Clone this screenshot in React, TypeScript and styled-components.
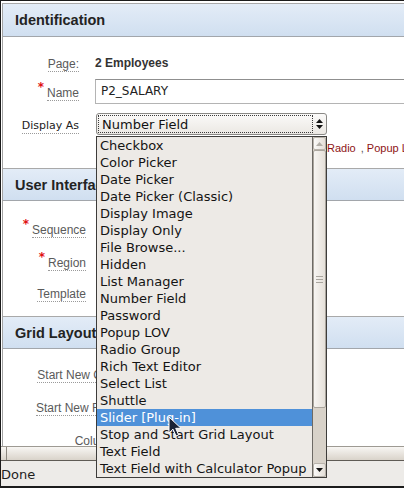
import React from "react";
import styled, { createGlobalStyle } from "styled-components";

const Global = createGlobalStyle`
  html, body { margin: 0; padding: 0; background: #fff; overflow: hidden; }
  #root { width: 404px; height: 488px; }
`;

const Window = styled.div`
  position: relative;
  width: 404px;
  height: 488px;
  box-sizing: border-box;
  border-top: 1px solid #1b1b1b;
  border-left: 1px solid #1b1b1b;
  border-bottom: 2px solid #1b1b1b;
  display: flex;
  flex-direction: column;
  background: #fff;
  overflow: hidden;
`;

const Viewport = styled.div`
  height: 445px;
  flex: none;
  overflow: hidden;
  box-sizing: border-box;
  padding: 2px 0 0 1px;
  background: #fff;
`;

const Region = styled.div`
  width: 800px;
  border-left: 1px solid #a4a4a4;
`;

const Section = styled.section`
  border-top: 1px solid #a9a9a9;
`;

const Header = styled.div<{ $h?: number }>`
  height: ${(p) => p.$h ?? 32}px;
  box-sizing: border-box;
  border-bottom: 1px solid #a2a6ab;
  background: linear-gradient(#e3ecf7, #d0dff0);
  display: flex;
  align-items: center;
  padding-left: 12px;
  font-family: "Liberation Sans", Arial, sans-serif;
  font-weight: bold;
  font-size: 14.5px;
  color: #232323;
`;

const Body = styled.div<{ $h: number; $pt: number }>`
  height: ${(p) => p.$h}px;
  box-sizing: border-box;
  padding-top: ${(p) => p.$pt}px;
  display: flex;
  flex-direction: column;
`;

const Row = styled.div<{ $lw: number; $h: number; $mt?: number }>`
  display: grid;
  grid-template-columns: ${(p) => p.$lw}px 1fr;
  column-gap: 16px;
  align-items: center;
  height: ${(p) => p.$h}px;
  margin-top: ${(p) => p.$mt ?? 0}px;
`;

const LabelCell = styled.div`
  justify-self: end;
  display: flex;
  align-items: flex-start;
`;

const Star = styled.span`
  color: #e01010;
  font-family: "DejaVu Sans", sans-serif;
  font-weight: bold;
  font-size: 12px;
  line-height: 10px;
  margin-right: 3px;
`;

const Label = styled.span<{ $dark?: boolean; $pt?: number }>`
  display: inline-block;
  margin-top: ${(p) => p.$pt ?? 0}px;
  font-family: ${(p) => (p.$dark ? '"DejaVu Sans", sans-serif' : '"Liberation Sans", Arial, sans-serif')};
  font-size: ${(p) => (p.$dark ? 11 : 12)}px;
  line-height: 14px;
  color: ${(p) => (p.$dark ? "#222" : "#5a5a5a")};
  border-bottom: 1px dotted #9a9a9a;
  white-space: nowrap;
`;

const Value = styled.span`
  font-family: "Liberation Sans", Arial, sans-serif;
  font-weight: bold;
  font-size: 12px;
  color: #333;
`;

const TextInput = styled.div`
  width: 360px;
  height: 25px;
  box-sizing: border-box;
  border: 1px solid #b4b4b4;
  border-top-color: #8f8f8f;
  padding-left: 5px;
  display: flex;
  align-items: center;
  font-family: "DejaVu Sans", sans-serif;
  font-size: 12px;
  color: #222;
`;

const Select = styled.div`
  margin-left: 1px;
  width: 231px;
  height: 22px;
  box-sizing: border-box;
  border: 1px solid #8a8986;
  border-radius: 3px;
  background: linear-gradient(#fbfaf9, #ebe8e3);
  padding: 1px;
  display: flex;
`;

const FocusBox = styled.div`
  flex: 1;
  border: 1px dotted #3a3a3a;
  display: flex;
  align-items: center;
  padding-left: 3px;
  font-family: "DejaVu Sans", sans-serif;
  font-size: 13px;
  color: #111;
`;

const Spinner = styled.div`
  width: 12px;
  display: flex;
  flex-direction: column;
  align-items: center;
  justify-content: center;
  gap: 2px;
`;

const Note = styled.div`
  padding-left: 232px;
  font-family: "Liberation Sans", Arial, sans-serif;
  font-size: 11px;
  color: #8e1414;
  white-space: nowrap;
`;

const Comma = styled.span`
  color: #555;
  margin: 0 3px 0 5px;
`;

const HScroll = styled.div`
  height: 15px;
  flex: none;
  box-sizing: border-box;
  border-top: 1px solid #9e9a93;
  border-bottom: 1px solid #5f5b55;
  background: linear-gradient(#f8f6f3, #d9d3ca);
  display: flex;
`;

const HThumbEdge = styled.div`
  width: 5px;
  border-right: 1px solid #8c877f;
`;

const StatusBar = styled.div`
  flex: 1;
  background: #edebe8;
  display: flex;
  align-items: center;
  padding-top: 1px;
  font-family: "DejaVu Sans", sans-serif;
  font-size: 13px;
  color: #1e1e1e;
`;

const DropList = styled.div`
  position: absolute;
  left: 95px;
  top: 135px;
  width: 231px;
  height: 342px;
  box-sizing: border-box;
  border: 1px solid #3d3c3a;
  background: #edeae6;
  display: flex;
`;

const Items = styled.div`
  flex: 1;
  border-right: 1px solid #6d6a65;
  overflow: hidden;
`;

const Item = styled.div<{ $sel?: boolean }>`
  height: 17px;
  line-height: 17px;
  padding-left: 3px;
  font-family: "DejaVu Sans", sans-serif;
  font-size: 13px;
  white-space: nowrap;
  color: ${(p) => (p.$sel ? "#fff" : "#141414")};
  background: ${(p) => (p.$sel ? "#4f91d9" : "transparent")};
`;

const VScroll = styled.div`
  width: 13px;
  display: flex;
  flex-direction: column;
  background: #d8d2c9;
`;

const ScrollBtn = styled.div<{ $h: number }>`
  height: ${(p) => p.$h}px;
  box-sizing: border-box;
  border: 1px solid #b8b3ab;
  border-radius: 2px;
  background: linear-gradient(90deg, #fbfaf8, #e4dfd8);
  display: flex;
  align-items: center;
  justify-content: center;
`;

const Thumb = styled.div`
  height: 258px;
  box-sizing: border-box;
  border: 1px solid #aaa59d;
  border-radius: 2px;
  background: linear-gradient(90deg, #f7f5f2, #e5e0d9);
  display: flex;
  flex-direction: column;
  align-items: center;
  justify-content: center;
  gap: 2px;
`;

const Grip = styled.div`
  width: 7px;
  height: 1px;
  background: #a9a59e;
`;

const Track = styled.div`
  flex: 1;
`;

const Cursor = styled.svg`
  position: absolute;
  left: 167px;
  top: 415px;
`;

const Tri = ({ up, color }: { up?: boolean; color: string }) => (
  <svg width="7" height="4" viewBox="0 0 7 4">
    <path d={up ? "M0 4 L3.5 0 L7 4 Z" : "M0 0 L7 0 L3.5 4 Z"} fill={color} />
  </svg>
);

const options = [
  "Checkbox",
  "Color Picker",
  "Date Picker",
  "Date Picker (Classic)",
  "Display Image",
  "Display Only",
  "File Browse...",
  "Hidden",
  "List Manager",
  "Number Field",
  "Password",
  "Popup LOV",
  "Radio Group",
  "Rich Text Editor",
  "Select List",
  "Shuttle",
  "Slider [Plug-in]",
  "Stop and Start Grid Layout",
  "Text Field",
  "Text Field with Calculator Popup",
];

export default function App() {
  return (
    <>
      <Global />
      <Window>
        <Viewport>
          <Region>
            <Section>
              <Header $h={33}>Identification</Header>
              <Body $h={131} $pt={14}>
                <Row $lw={76} $h={24}>
                  <LabelCell>
                    <Label $pt={2}>Page:</Label>
                  </LabelCell>
                  <Value>2 Employees</Value>
                </Row>
                <Row $lw={76} $h={26} $mt={3}>
                  <LabelCell>
                    <Star>*</Star>
                    <Label $pt={4}>Name</Label>
                  </LabelCell>
                  <TextInput>P2_SALARY</TextInput>
                </Row>
                <Row $lw={76} $h={22} $mt={9}>
                  <LabelCell>
                    <Label $dark $pt={4}>Display As</Label>
                  </LabelCell>
                  <Select>
                    <FocusBox>Number Field</FocusBox>
                    <Spinner>
                      <Tri up color="#111" />
                      <Tri color="#111" />
                    </Spinner>
                  </Select>
                </Row>
                <Row $lw={76} $h={16} $mt={5}>
                  <span />
                  <Note>
                    Radio<Comma>,</Comma>Popup LOV
                  </Note>
                </Row>
              </Body>
            </Section>
            <Section>
              <Header>User Interface</Header>
              <Body $h={115} $pt={11}>
                <Row $lw={83} $h={33}>
                  <LabelCell>
                    <Star>*</Star>
                    <Label $pt={4}>Sequence</Label>
                  </LabelCell>
                  <span />
                </Row>
                <Row $lw={83} $h={33}>
                  <LabelCell>
                    <Star>*</Star>
                    <Label $pt={4}>Region</Label>
                  </LabelCell>
                  <span />
                </Row>
                <Row $lw={83} $h={33}>
                  <LabelCell>
                    <Label>Template</Label>
                  </LabelCell>
                  <span />
                </Row>
              </Body>
            </Section>
            <Section>
              <Header>Grid Layout</Header>
              <Body $h={120} $pt={10}>
                <Row $lw={113} $h={33}>
                  <LabelCell>
                    <Label>Start New Grid</Label>
                  </LabelCell>
                  <span />
                </Row>
                <Row $lw={113} $h={33}>
                  <LabelCell>
                    <Label>Start New Row</Label>
                  </LabelCell>
                  <span />
                </Row>
                <Row $lw={113} $h={33}>
                  <LabelCell>
                    <Label>Column</Label>
                  </LabelCell>
                  <span />
                </Row>
              </Body>
            </Section>
          </Region>
        </Viewport>
        <HScroll>
          <HThumbEdge />
        </HScroll>
        <StatusBar>Done</StatusBar>

        <DropList>
          <Items>
            {options.map((o) => (
              <Item key={o} $sel={o === "Slider [Plug-in]"}>
                {o}
              </Item>
            ))}
          </Items>
          <VScroll>
            <ScrollBtn $h={13}>
              <Tri up color="#b3afa8" />
            </ScrollBtn>
            <Thumb>
              <Grip />
              <Grip />
              <Grip />
            </Thumb>
            <Track />
            <ScrollBtn $h={14}>
              <Tri color="#111" />
            </ScrollBtn>
          </VScroll>
        </DropList>

        <Cursor width="16" height="22" viewBox="0 0 16 22">
          <path
            d="M1 1 L1 17 L5 13.2 L8 20 L10.6 18.9 L7.7 12.3 L13 12.3 Z"
            fill="#1b2336"
            stroke="#fff"
            strokeWidth="1"
            strokeLinejoin="round"
          />
        </Cursor>
      </Window>
    </>
  );
}
